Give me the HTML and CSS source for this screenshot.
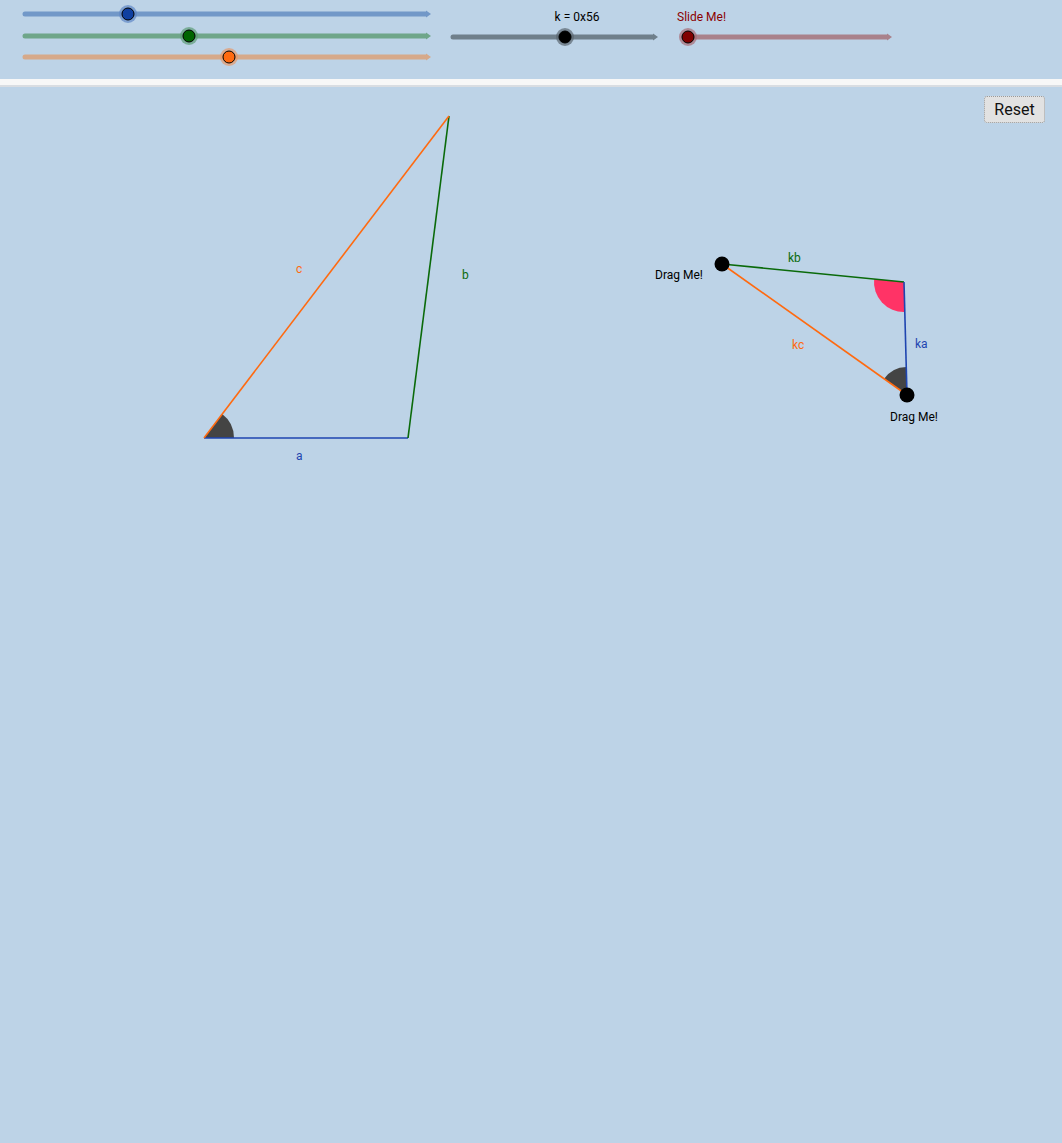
FILE: index.html
```
<!DOCTYPE html>
<html>
<head>
<meta charset="utf-8">
<link rel="stylesheet" href="styles.css">
</head>
<body>
<div class="app">
  <div class="slider-panel">
    <svg class="panel-svg" width="1062" height="79" viewBox="0 0 1062 79">
      <g class="slider">
        <line x1="25" y1="14" x2="426" y2="14" stroke="#7298c8" stroke-width="5" stroke-linecap="round"/>
        <polygon points="426,10.5 431,14 426,17.5" fill="#7298c8"/>
        <circle cx="128" cy="14" r="9" fill="#5f87c6" opacity="0.7"/>
        <circle cx="128" cy="14" r="6" fill="#1040a0" stroke="#000" stroke-width="1"/>
      </g>
      <g class="slider">
        <line x1="25" y1="36" x2="426" y2="36" stroke="#6fa68a" stroke-width="5" stroke-linecap="round"/>
        <polygon points="426,32.5 431,36 426,39.5" fill="#6fa68a"/>
        <circle cx="189" cy="36" r="9" fill="#5e9c78" opacity="0.7"/>
        <circle cx="189" cy="36" r="6" fill="#006400" stroke="#000" stroke-width="1"/>
      </g>
      <g class="slider">
        <line x1="25" y1="57" x2="426" y2="57" stroke="#d6a98a" stroke-width="5" stroke-linecap="round"/>
        <polygon points="426,53.5 431,57 426,60.5" fill="#d6a98a"/>
        <circle cx="229" cy="57" r="9" fill="#e59a6c" opacity="0.7"/>
        <circle cx="229" cy="57" r="6" fill="#ff6a10" stroke="#000" stroke-width="1"/>
      </g>
      <g class="slider">
        <line x1="453" y1="37" x2="653" y2="37" stroke="#6f7f8b" stroke-width="5" stroke-linecap="round"/>
        <polygon points="653,33.5 658,37 653,40.5" fill="#6f7f8b"/>
        <circle cx="565" cy="37" r="9" fill="#5b6670" opacity="0.7"/>
        <circle cx="565" cy="37" r="6" fill="#000" stroke="#000" stroke-width="1"/>
        <text class="slider-label" x="577" y="21" text-anchor="middle" fill="#000">k = 0x56</text>
      </g>
      <g class="slider">
        <line x1="684" y1="37" x2="887" y2="37" stroke="#a9818b" stroke-width="5" stroke-linecap="round"/>
        <polygon points="887,33.5 892,37 887,40.5" fill="#a9818b"/>
        <circle cx="688" cy="37" r="9" fill="#a86c76" opacity="0.7"/>
        <circle cx="688" cy="37" r="6" fill="#800000" stroke="#000" stroke-width="1"/>
        <text class="slider-label" x="677" y="21" fill="#8b0000">Slide Me!</text>
      </g>
    </svg>
  </div>
  <div class="divider"></div>
  <div class="canvas">
    <svg class="canvas-svg" width="1062" height="1056" viewBox="0 87 1062 1056">
      <!-- Triangle 1 -->
      <path d="M204,438 L234,438 A30,30 0 0 0 222.2,414.1 Z" fill="#444"/>
      <line x1="204" y1="438" x2="408" y2="438" stroke="#1f45b0" stroke-width="1.6"/>
      <line x1="408" y1="438" x2="449" y2="116" stroke="#0a6a0a" stroke-width="1.6"/>
      <line x1="204" y1="438" x2="449" y2="116" stroke="#ff6a10" stroke-width="1.6"/>
      <text class="lbl" x="296" y="460" fill="#1f45b0">a</text>
      <text class="lbl" x="462" y="279" fill="#0a6a0a">b</text>
      <text class="lbl" x="296" y="273" fill="#ff6a10">c</text>

      <!-- Triangle 2 -->
      <path d="M904,282 L874.1,279 A30,30 0 0 0 904.8,312 Z" fill="#ff3366"/>
      <path d="M907,395 L906.3,367 A28,28 0 0 0 884.1,378.8 Z" fill="#444"/>
      <line x1="722" y1="264" x2="904" y2="282" stroke="#0a6a0a" stroke-width="1.6"/>
      <line x1="904" y1="282" x2="907" y2="395" stroke="#1f45b0" stroke-width="1.6"/>
      <line x1="722" y1="264" x2="907" y2="395" stroke="#ff6a10" stroke-width="1.6"/>
      <circle cx="722" cy="264" r="7.5" fill="#000"/>
      <circle cx="907" cy="395" r="7.5" fill="#000"/>
      <text class="lbl" x="788" y="262" fill="#0a6a0a">kb</text>
      <text class="lbl" x="792" y="349" fill="#ff6a10">kc</text>
      <text class="lbl" x="915" y="348" fill="#1f45b0">ka</text>
      <text class="lbl" x="655" y="279" fill="#000">Drag Me!</text>
      <text class="lbl" x="890" y="421" fill="#000">Drag Me!</text>
    </svg>
    <button class="reset">Reset</button>
  </div>
</div>
</body>
</html>
```
FILE: styles.css
```
html, body {
  margin: 0;
  padding: 0;
  background: #bdd3e7;
  font-family: Roboto, "Liberation Sans", sans-serif;
}
.app {
  width: 1062px;
  height: 1143px;
  display: flex;
  flex-direction: column;
  overflow: hidden;
}
.slider-panel {
  height: 79px;
  flex: none;
}
.panel-svg, .canvas-svg {
  display: block;
}
.slider-label {
  font-family: Roboto, "Liberation Sans", sans-serif;
  font-size: 12px;
}
.divider {
  height: 6px;
  flex: none;
  background: #f7f7f7;
  border-bottom: 2px solid #d9dde2;
}
.canvas {
  flex: 1;
  position: relative;
}
.lbl {
  font-family: Roboto, "Liberation Sans", sans-serif;
  font-size: 12px;
}
.reset {
  position: absolute;
  top: 9px;
  right: 17px;
  width: 61px;
  height: 27px;
  padding: 0;
  background: #e2e2e2;
  border: 1px dotted #9a9a9a;
  border-radius: 3px;
  font-family: Roboto, "Liberation Sans", sans-serif;
  font-size: 16px;
  color: #111;
}
```
